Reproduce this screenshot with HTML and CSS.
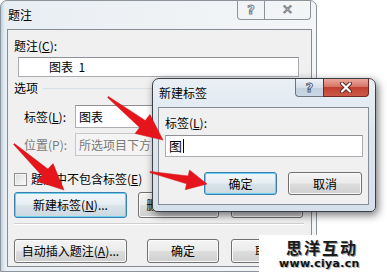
FILE: index.html
```html
<!DOCTYPE html>
<html lang="zh-CN">
  <head>
    <meta charset="UTF-8" />
    <title>题注 - 新建标签</title>
    <link rel="stylesheet" href="styles.css">
  </head>
  <body>
    <div class="dialog back">
      <div class="titlebar">
        <span class="title">题注</span>
        <div class="caption-btns">
          <span class="cap help">?</span>
          <span class="cap close">✕</span>
        </div>
      </div>
      <div class="client">
        <div class="label">题注(<u>C</u>):</div>
        <div class="input caption-input">图表&nbsp;&nbsp;1</div>
        <div class="group"><span>选项</span><i></i></div>
        <div class="row">
          <span class="row-label">标签(<u>L</u>):</span>
          <div class="input combo">图表</div>
        </div>
        <div class="row disabled">
          <span class="row-label">位置(P):</span>
          <div class="input combo">所选项目下方</div>
        </div>
        <div class="check"><span class="box"></span><span>题注中不包含标签(<u>E</u>)</span></div>
        <div class="btn-row first">
          <span class="btn focus w113">新建标签(<u>N</u>)...</span>
          <span class="btn w81 gap11">删除标签(<u>D</u>)</span>
          <span class="btn w72 gap12">编号(<u>U</u>)...</span>
        </div>
        <div class="sep"></div>
        <div class="btn-row">
          <span class="btn w113">自动插入题注(<u>A</u>)...</span>
          <span class="btn w72 gap20">确定</span>
          <span class="btn w72 gap12">取消</span>
        </div>
      </div>
    </div>

    <div class="dialog front">
      <div class="titlebar">
        <span class="title">新建标签</span>
        <div class="caption-btns">
          <span class="cap help">?</span>
          <span class="cap close">
            <svg width="14" height="11" viewBox="0 0 14 11">
              <path d="M3 1.5L11 9.5M11 1.5L3 9.5" stroke="#5a2620" stroke-width="4" stroke-linecap="round"/>
              <path d="M3 1.5L11 9.5M11 1.5L3 9.5" stroke="#fff" stroke-width="2.2" stroke-linecap="round"/>
            </svg>
          </span>
        </div>
      </div>
      <div class="client">
        <div class="label">标签(<u>L</u>):</div>
        <div class="input name-input">图<span class="caret"></span></div>
        <div class="btn-row right">
          <span class="btn focus w73">确定</span>
          <span class="btn w74">取消</span>
        </div>
      </div>
    </div>

    <svg class="arrows" width="387" height="277" viewBox="0 0 387 277">
      <polygon points="108.4,96.5 145.3,120.5 149.9,114.5 163,140 135.1,133.5 139.7,127.5 107.6,97.5"/>
      <polygon points="14.4,143.6 47.9,169.1 53,163.6 64,190 36.8,181.2 41.9,175.7 13.6,144.4"/>
      <polygon points="150.1,171.4 188.2,176 189.5,170.1 207,184 185.3,189.7 186.6,183.8 149.9,172.6"/>
    </svg>

    <div class="watermark">
      <div class="wm-name">思洋互动</div>
      <div class="wm-url">www.ciya.cn</div>
    </div>
  </body>
</html>
```

FILE: styles.css
```css
* {
  margin: 0;
  padding: 0;
  box-sizing: border-box;
}
body {
  position: relative;
  width: 387px;
  height: 277px;
  overflow: hidden;
  background: #fff;
  color: #000;
  font-family: "Noto Sans CJK SC", "Microsoft YaHei", sans-serif;
  font-size: 12px;
  line-height: 16px;
}
u {
  text-decoration: underline;
  text-underline-offset: 1px;
}

/* window frames */
.dialog {
  display: flex;
  flex-direction: column;
  border: 1px solid #8d939a;
  border-radius: 7px 7px 0 0;
}
.back {
  width: 317px;
  height: 272px;
  padding: 0 4px 4px 6px;
  background: linear-gradient(90deg, #bcd2e6 0, #e8eef4 4px, #eef1f4 40%, #f3f5f7 100%);
}
.front {
  position: absolute;
  left: 152px;
  top: 78px;
  width: 224px;
  height: 134px;
  padding: 0 6px 6px 5px;
  border-color: #3b4047;
  border-radius: 7px 7px 5px 5px;
  background: linear-gradient(#e9eff5, #dde6ef 40%, #d6e0ea);
  box-shadow: 2px 3px 8px rgba(0, 0, 0, 0.55);
}
.titlebar {
  display: flex;
  justify-content: space-between;
  height: 28px;
}
.title {
  padding: 6px 0 0 1px;
}
.caption-btns {
  display: flex;
  height: 19px;
}
.back .caption-btns {
  margin-right: 1px;
}
.front .caption-btns {
  height: 18px;
}
.cap {
  display: flex;
  align-items: center;
  justify-content: center;
  height: 100%;
  border: 1px solid #8d939a;
  border-top: none;
  font-family: "DejaVu Sans", sans-serif;
  font-weight: bold;
  font-size: 13px;
  color: #f5f5f5;
  -webkit-text-stroke: 1px #7a7f86;
}
.back .help {
  width: 27px;
  border-right: none;
  border-radius: 0 0 0 4px;
}
.back .close {
  width: 47px;
  border-radius: 0 0 4px 0;
}
.front .help {
  width: 28px;
  border-color: #6b7580;
  border-right: none;
  border-radius: 0 0 0 4px;
  background: linear-gradient(#eef3f8, #d5dfe9 50%, #c3d0dd 51%, #c9d6e3);
  color: #fff;
  -webkit-text-stroke: 1px #58626e;
}
.front .close {
  width: 46px;
  border-color: #6b2a22;
  border-radius: 0 0 4px 0;
  background: linear-gradient(#eaa89d, #d77566 45%, #c2402f 50%, #cc5a49);
}

/* client area */
.client {
  flex: 1;
  display: flex;
  flex-direction: column;
  border: 1px solid #878b93;
  background: #f0f0f0;
  padding-left: 6px;
}
.back .client .label {
  margin-top: 8px;
}
.input {
  display: flex;
  align-items: center;
  background: #fff;
  border: 1px solid #abadb3;
  border-top-color: #8e9096;
  padding-left: 3px;
}
.caption-input {
  margin: 3px 0 0 4px;
  width: 281px;
  height: 20px;
  padding-left: 30px;
}
.group {
  display: flex;
  align-items: center;
  margin-top: 3px;
  height: 16px;
}
.group i {
  flex: 1;
  margin: 1px 6px 0 5px;
  border-top: 1px solid #d5dfe5;
}
.row {
  display: flex;
  align-items: center;
  margin-top: 9px;
  padding-left: 10px;
}
.row + .row {
  margin-top: 5px;
}
.row-label {
  width: 51px;
}
.combo {
  width: 224px;
  height: 23px;
}
.disabled {
  color: #7a7a7a;
}
.disabled .combo {
  background: #f4f4f4;
  border-color: #c5c8cc;
}
.check {
  display: flex;
  align-items: center;
  gap: 4px;
  margin-top: 15px;
}
.box {
  width: 13px;
  height: 13px;
  border: 1px solid #8e8f8f;
  background: linear-gradient(135deg, #dcdcdc, #fafafa);
  box-shadow: inset 0 0 0 1px #f4f4f4;
}

/* buttons */
.btn-row {
  display: flex;
  margin-top: 14px;
}
.btn-row.first {
  margin-top: 5px;
}
.btn-row.first .btn {
  height: 26px;
}
.btn {
  display: flex;
  align-items: center;
  justify-content: center;
  height: 24px;
  border: 1px solid #707070;
  border-radius: 3px;
  background: linear-gradient(#f4f4f4, #ebebeb 48%, #dddddd 52%, #cfcfcf);
  box-shadow: inset 0 0 0 1px #fbfbfb;
}
.btn.focus {
  border-color: #3c7fb1;
  background: linear-gradient(#f1f6f9, #e7eef3 48%, #d9e3ea 52%, #ccd8e0);
  box-shadow: inset 0 0 0 1px #69d0f0;
}
.w113 { width: 113px; }
.w81 { width: 81px; }
.w72 { width: 72px; }
.w73 { width: 73px; }
.w74 { width: 74px; }
.gap11 { margin-left: 11px; }
.gap12 { margin-left: 12px; }
.gap20 { margin-left: 20px; }
.sep {
  margin: 5px 7px 0 0;
  border-top: 1px solid #cfcfcf;
  border-bottom: 1px solid #fff;
}

/* new label dialog */
.front .client .label {
  margin-top: 7px;
}
.name-input {
  margin-top: 4px;
  width: 198px;
  height: 22px;
  font-size: 13px;
}
.caret {
  display: inline-block;
  width: 1px;
  height: 14px;
  margin-left: 1px;
  background: #000;
}
.btn-row.right {
  justify-content: flex-end;
  gap: 11px;
  margin-top: 15px;
  padding-right: 6px;
}
.btn-row.right .btn {
  height: 23px;
}

/* overlays */
.arrows {
  position: absolute;
  left: 0;
  top: 0;
  pointer-events: none;
}
.arrows polygon {
  fill: #e6151c;
  stroke: #d01017;
  stroke-width: 0.5;
}
.watermark {
  position: absolute;
  left: 259px;
  top: 235px;
  right: 0;
  bottom: 0;
  background: #fff;
  padding: 4px 0 0 20px;
}
.wm-name {
  font-size: 16px;
  line-height: 16px;
  font-weight: bold;
  letter-spacing: 2px;
  margin-left: 7px;
  color: #1a1a1a;
  text-shadow: 1px 1px 0 #9a9a9a;
}
.wm-url {
  margin-top: 3px;
  font-family: "DejaVu Sans", sans-serif;
  font-size: 11px;
  line-height: 11px;
  font-weight: bold;
  letter-spacing: 0.3px;
  color: #111;
  text-shadow: 1px 1px 0 #bbb, -1px 0 0 #ddd;
}
```
